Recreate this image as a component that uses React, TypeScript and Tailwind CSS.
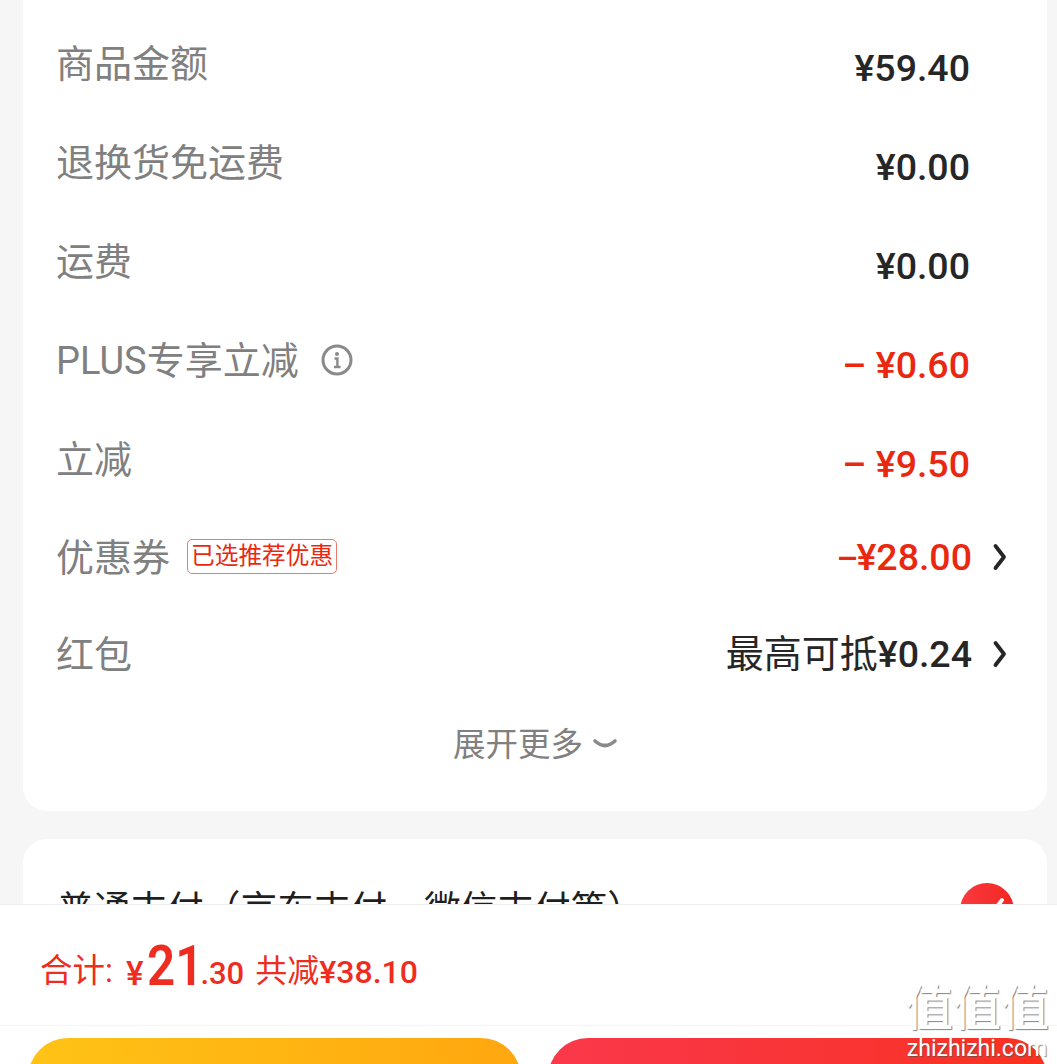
const sans = "font-['Roboto','Noto_Sans_CJK_SC',sans-serif]";

function Chevron() {
  return (
    <svg width="16" height="28" viewBox="0 0 16 28" fill="none" className="shrink-0 -translate-y-[1px]">
      <path d="M3.5 3 L12 14 L3.5 25" stroke="#262626" strokeWidth="3.8" strokeLinecap="round" strokeLinejoin="round" />
    </svg>
  );
}

function InfoIcon() {
  return (
    <svg width="32" height="32" viewBox="0 0 32 32" fill="none" className="-translate-x-[1px] -translate-y-[1px]">
      <circle cx="16" cy="16" r="14" stroke="#8a8a8a" strokeWidth="3" />
      <circle cx="16" cy="10" r="2" fill="#8a8a8a" />
      <path d="M13.5 14.5 H16.4 V23 M13 23 H19.5" stroke="#8a8a8a" strokeWidth="2.4" />
    </svg>
  );
}

function PlainRow({ label, value, red, info }: { label: string; value: string; red?: boolean; info?: boolean }) {
  return (
    <div className="flex h-[99px] items-center justify-between pl-[33px] pr-[77px]">
      <div className="flex items-center gap-[23px] pb-[10px] text-[38px] leading-none text-[#808080]">
        <span>{label}</span>
        {info && <InfoIcon />}
      </div>
      <span className={`text-[37.5px] font-medium leading-none ${red ? "text-[#e9280f]" : "text-[#262626]"}`}>{value}</span>
    </div>
  );
}

export default function App() {
  return (
    <div className={`relative h-[1064px] w-[1057px] overflow-hidden bg-[#f6f6f6] ${sans}`}>
      <div className="pl-[23px] pr-[10px]">
        <div className="-mt-[30px] rounded-[24px] bg-white pt-[49px]">
          <PlainRow label="商品金额" value="¥59.40" />
          <PlainRow label="退换货免运费" value="¥0.00" />
          <PlainRow label="运费" value="¥0.00" />
          <PlainRow label="PLUS专享立减" value="– ¥0.60" red info />
          <PlainRow label="立减" value="– ¥9.50" red />

          <div className="-mt-[5px] flex h-[97px] items-center justify-between pl-[33px] pr-[39px]">
            <div className="flex items-center gap-[17px]">
              <span className="pt-[1px] text-[38px] leading-none text-[#808080]">优惠券</span>
              <span className="-translate-y-[1px] rounded-[5px] border border-[#ea7a6c] px-[3px] py-[4px] text-[23.7px] leading-[25px] text-[#e9280f]">已选推荐优惠</span>
            </div>
            <div className="flex items-center gap-[20px]">
              <span className="text-[37.5px] font-medium leading-none text-[#e9280f]">
                <span className="text-[34px] tracking-[-2px]">–</span>¥28.00
              </span>
              <Chevron />
            </div>
          </div>

          <div className="flex h-[97px] items-center justify-between pl-[33px] pr-[39px]">
            <span className="pt-[1px] text-[38px] leading-none text-[#808080]">红包</span>
            <div className="flex items-center gap-[20px]">
              <span className="text-[37.5px] font-medium leading-none text-[#262626]">
                <span className="text-[38px] font-normal">最高可抵</span>¥0.24
              </span>
              <Chevron />
            </div>
          </div>

          <div className="flex h-[108px] items-start justify-center gap-[9px] pl-[1px] pt-[20px]">
            <span className="text-[32.5px] leading-[44px] text-[#808080]">展开更多</span>
            <svg width="26" height="44" viewBox="0 0 26 44" fill="none">
              <path d="M3 18 Q13 27 23 18" stroke="#8a8a8a" strokeWidth="3.6" strokeLinecap="round" />
            </svg>
          </div>
        </div>

        <div className="mt-[28px] h-[200px] rounded-t-[24px] bg-white">
          <div className="flex items-start justify-between pl-[34px] pr-[33px] pt-[44px]">
            <span className="pt-[2px] text-[36.7px] leading-[50px] text-[#1f1f1f]">普通支付（京东支付、微信支付等）</span>
            <span className="flex h-[54px] w-[54px] items-center justify-center rounded-full bg-gradient-to-r from-[#f9383f] to-[#f4271f]">
              <svg width="34" height="34" viewBox="0 0 34 34" fill="none">
                <path d="M8 20 L16 28 L32 7" stroke="white" strokeWidth="4" strokeLinecap="round" strokeLinejoin="round" />
              </svg>
            </span>
          </div>
        </div>
      </div>

      <div className="absolute inset-x-0 top-[904px] h-[160px] border-t border-[#eeeeee] bg-white">
        <div className="flex h-[121px] items-baseline border-b border-[#f4f4f4] pl-[40px] pt-[33px] text-[#ee2c1f]">
          <span className="-translate-y-[3px] text-[32.5px] leading-none">合计:</span>
          <span className="ml-[13px] text-[33px] font-medium leading-none">¥</span>
          <span className="ml-[4px] mr-[-11px] inline-block origin-left scale-x-[0.88] text-[56px] font-semibold leading-none">21</span>
          <span className="-translate-y-[1px] text-[31px] font-medium leading-none">.30</span>
          <span className="ml-[11px] -translate-y-[3px] text-[32px] leading-none">共减</span>
          <span className="-translate-y-[2px] text-[32px] font-medium leading-none">¥38.10</span>
        </div>
        <div className="flex justify-between pl-[28px] pr-[10px] pt-[12px]">
          <div className="h-[80px] w-[493px] rounded-[40px] bg-gradient-to-r from-[#ffc316] to-[#ffa70f]" />
          <div className="h-[80px] w-[499px] rounded-[40px] bg-gradient-to-r from-[#f9384a] to-[#f9311d]" />
        </div>
      </div>

      <div className="absolute left-[902px] top-[981px] flex w-[150px] flex-col items-center text-white [text-shadow:1px_1px_1px_rgba(80,80,80,0.7)]">
        <span className="text-[48px] font-medium leading-[56px]">值值值</span>
        <span className="text-[23px] leading-[24px]">zhizhizhi.com</span>
      </div>
    </div>
  );
}
